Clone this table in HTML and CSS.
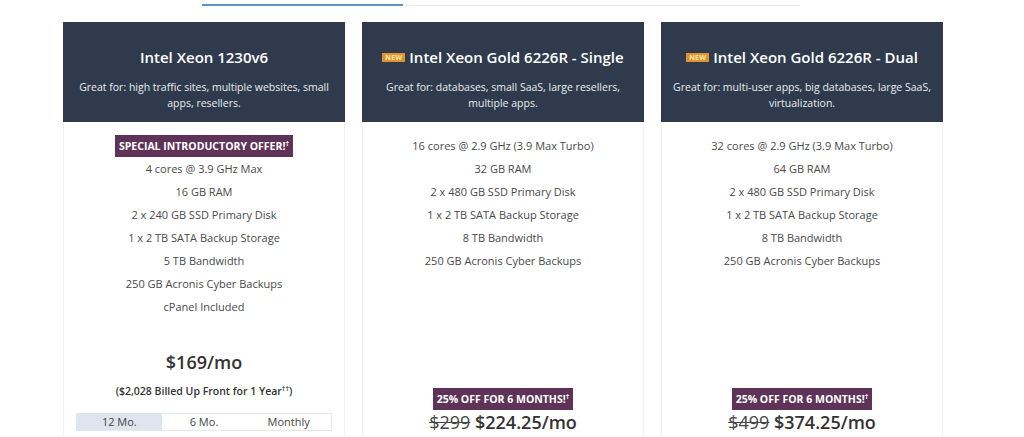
FILE: index.html
```html
<!DOCTYPE html>
<html lang="en">
<head>
    <meta charset="UTF-8">
    <meta name="viewport" content="width=device-width, initial-scale=1.0">
    <title>Dedicated Servers</title>
    <link rel="stylesheet" href="styles.css">
</head>
<body>
    <div class="tab-rule">
        <span class="tab-rule-active"></span>
    </div>

    <div class="plans">
        <div class="plan">
            <div class="plan-head">
                <h2>Intel Xeon 1230v6</h2>
                <p>Great for: high traffic sites, multiple websites, small apps, resellers.</p>
            </div>
            <div class="plan-body">
                <ul class="specs">
                    <li><span class="promo">Special Introductory Offer!<sup>†</sup></span></li>
                    <li>4 cores @ 3.9 GHz Max</li>
                    <li>16 GB RAM</li>
                    <li>2 x 240 GB SSD Primary Disk</li>
                    <li>1 x 2 TB SATA Backup Storage</li>
                    <li>5 TB Bandwidth</li>
                    <li>250 GB Acronis Cyber Backups</li>
                    <li>cPanel Included</li>
                </ul>
                <div class="pricing">
                    <div class="price">$169/mo</div>
                    <div class="billed">($2,028 Billed Up Front for 1 Year<sup>††</sup>)</div>
                    <div class="terms">
                        <span class="term active">12 Mo.</span>
                        <span class="term">6 Mo.</span>
                        <span class="term">Monthly</span>
                    </div>
                </div>
            </div>
        </div>

        <div class="plan">
            <div class="plan-head">
                <h2><span class="new">NEW</span>Intel Xeon Gold 6226R - Single</h2>
                <p>Great for: databases, small SaaS, large resellers, multiple apps.</p>
            </div>
            <div class="plan-body">
                <ul class="specs">
                    <li>16 cores @ 2.9 GHz (3.9 Max Turbo)</li>
                    <li>32 GB RAM</li>
                    <li>2 x 480 GB SSD Primary Disk</li>
                    <li>1 x 2 TB SATA Backup Storage</li>
                    <li>8 TB Bandwidth</li>
                    <li>250 GB Acronis Cyber Backups</li>
                </ul>
                <div class="pricing">
                    <span class="promo">25% Off for 6 Months!<sup>†</sup></span>
                    <div class="price"><s>$299</s> $224.25/mo</div>
                </div>
            </div>
        </div>

        <div class="plan">
            <div class="plan-head">
                <h2><span class="new">NEW</span>Intel Xeon Gold 6226R - Dual</h2>
                <p>Great for: multi-user apps, big databases, large SaaS, virtualization.</p>
            </div>
            <div class="plan-body">
                <ul class="specs">
                    <li>32 cores @ 2.9 GHz (3.9 Max Turbo)</li>
                    <li>64 GB RAM</li>
                    <li>2 x 480 GB SSD Primary Disk</li>
                    <li>1 x 2 TB SATA Backup Storage</li>
                    <li>8 TB Bandwidth</li>
                    <li>250 GB Acronis Cyber Backups</li>
                </ul>
                <div class="pricing">
                    <span class="promo">25% Off for 6 Months!<sup>†</sup></span>
                    <div class="price"><s>$499</s> $374.25/mo</div>
                </div>
            </div>
        </div>
    </div>
</body>
</html>
```

FILE: styles.css
```css
* {
    margin: 0;
    padding: 0;
    box-sizing: border-box;
}

body {
    font-family: 'Open Sans', 'Liberation Sans', sans-serif;
    background: #fff;
    color: #444;
    padding: 4px 0 0 63px;
}

.tab-rule {
    width: 598px;
    margin-left: 139px;
    height: 2px;
    border-bottom: 1px solid #ececec;
    display: flex;
}

.tab-rule-active {
    width: 201px;
    height: 2px;
    background: #5b95cc;
}

.plans {
    display: flex;
    gap: 17px;
    margin-top: 16px;
    align-items: stretch;
}

.plan {
    width: 282px;
    border: 1px solid #eef0f4;
    border-top: none;
    display: flex;
    flex-direction: column;
}

.plan-head {
    background: #2f3b4c;
    color: #fff;
    height: 100px;
    padding: 24px 12px 0;
    text-align: center;
    margin: 0 -1px;
}

.plan-head h2 {
    font-size: 15px;
    font-weight: 600;
    line-height: 22px;
    white-space: nowrap;
    display: flex;
    align-items: center;
    justify-content: center;
}

.plan-head p {
    font-size: 10.5px;
    line-height: 16px;
    margin-top: 11px;
    color: #e8ebf0;
}

.new {
    display: inline-block;
    background: #e3932c;
    color: #fbe3a8;
    font-size: 7px;
    font-weight: 700;
    line-height: 9px;
    padding: 0 3px;
    margin-right: 4px;
    letter-spacing: 0.2px;
}

.plan-body {
    flex: 1;
    display: flex;
    flex-direction: column;
    padding: 12px 12px 20px;
    text-align: center;
}

.specs {
    list-style: none;
}

.specs li {
    font-size: 11px;
    line-height: 23px;
    color: #4a4a4a;
}

.promo {
    display: inline-block;
    background: #5e3357;
    color: #fff;
    font-size: 10.5px;
    font-weight: 700;
    line-height: 22px;
    padding: 0 4px;
    text-transform: uppercase;
}

.promo sup {
    font-size: 7px;
    line-height: 0;
}

.pricing {
    margin-top: auto;
    padding-top: 32px;
}

.price {
    font-size: 18px;
    font-weight: 600;
    line-height: 24px;
    color: #333;
}

.price s {
    font-weight: 400;
    color: #444;
}

.billed {
    font-size: 10.5px;
    font-weight: 600;
    line-height: 16px;
    margin-top: 9px;
    color: #333;
}

.billed sup {
    font-size: 7px;
    line-height: 0;
}

.terms {
    display: flex;
    margin-top: 14px;
    margin-bottom: 3px;
    border: 1px solid #e3e7ee;
}

.term {
    flex: 1;
    font-size: 11px;
    line-height: 16px;
    color: #444;
}

.term.active {
    background: #dfe5ee;
}
```
